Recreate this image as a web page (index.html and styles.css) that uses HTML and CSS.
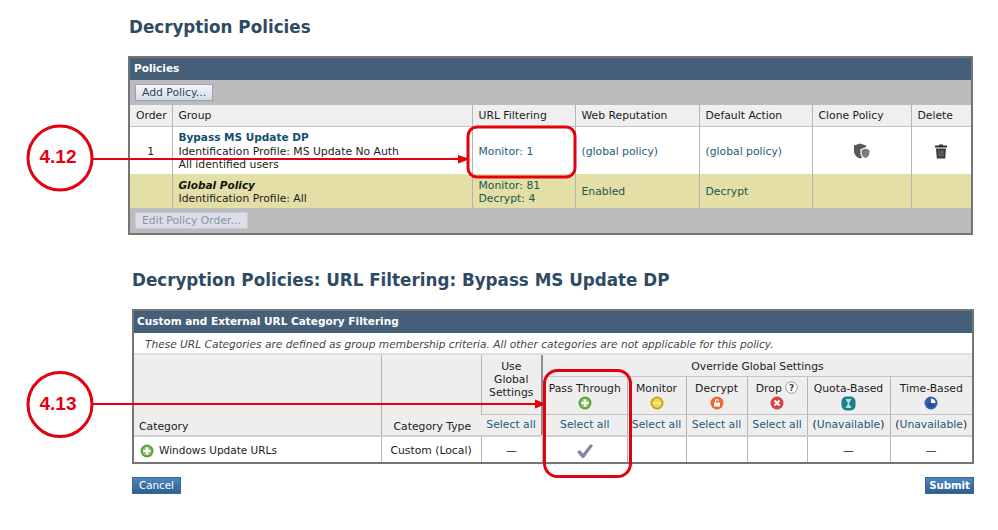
FILE: index.html
```html
<!DOCTYPE html>
<html lang="en">
<head>
<meta charset="utf-8">
<title>Decryption Policies</title>
<link rel="stylesheet" href="styles.css">
</head>
<body>
<main class="page">
  <section class="panel panel-policies">
    <h1 class="title">Decryption Policies</h1>
    <div class="box">
      <div class="box-head">Policies</div>
      <div class="toolbar"><button class="btn" type="button">Add Policy...</button></div>
      <table class="grid grid-policies">
        <colgroup>
          <col class="p1"><col class="p2"><col class="p3"><col class="p4"><col class="p5"><col class="p6"><col class="p7">
        </colgroup>
        <thead>
          <tr class="row-head">
            <th>Order</th><th>Group</th><th>URL Filtering</th><th>Web Reputation</th><th>Default Action</th><th>Clone Policy</th><th>Delete</th>
          </tr>
        </thead>
        <tbody>
          <tr class="row-one">
            <td class="center">1</td>
            <td><a class="policy-name">Bypass MS Update DP</a><br>Identification Profile: MS Update No Auth<br>All identified users</td>
            <td><a class="link">Monitor: 1</a></td>
            <td><a class="link">(global policy)</a></td>
            <td><a class="link">(global policy)</a></td>
            <td class="center">
              <svg class="icon-clone" width="18" height="16" viewBox="0 0 18 16"><path d="M1 2.500 7 0.500 13 2.500V8C13 12 10 14.500 7 15.500 4 14.500 1 12 1 8Z" fill="#55585a"/><path d="M8 6.500 12.500 5 17 6.500V10C17 13 15 14.800 12.500 15.800 10 14.800 8 13 8 10Z" fill="#787c7e" stroke="#fff" stroke-width="1.200"/></svg>
            </td>
            <td class="center">
              <svg class="icon-trash" width="14" height="15" viewBox="0 0 14 15"><path d="M5 1.500V0.500H9V1.500H13V3.500H1V1.500Z" fill="#2e2e2e"/><path d="M2 4.500H12L11.200 14.500H2.800Z" fill="#3a3a3a"/><path d="M5 6.500V12.500M7 6.500V12.500M9 6.500V12.500" stroke="#8a8a8a" stroke-width="0.800"/></svg>
            </td>
          </tr>
          <tr class="row-global">
            <td></td>
            <td><b class="global-name">Global Policy</b><br>Identification Profile: All</td>
            <td><a class="link-dark">Monitor: 81<br>Decrypt: 4</a></td>
            <td><a class="link-dark">Enabled</a></td>
            <td><a class="link-dark">Decrypt</a></td>
            <td></td>
            <td></td>
          </tr>
        </tbody>
      </table>
      <div class="toolbar toolbar-foot"><button class="btn btn-off" type="button">Edit Policy Order...</button></div>
    </div>
  </section>

  <section class="panel panel-filter">
    <h1 class="title title-filter">Decryption Policies: URL Filtering: Bypass MS Update DP</h1>
    <div class="box">
      <div class="box-head box-head-filter">Custom and External URL Category Filtering</div>
      <div class="note">These URL Categories are defined as group membership criteria. All other categories are not applicable for this policy.</div>
      <table class="grid grid-filter">
        <colgroup>
          <col class="f1"><col class="f2"><col class="f3"><col class="f4"><col class="f5"><col class="f6"><col class="f7"><col class="f8"><col class="f9">
        </colgroup>
        <thead>
          <tr class="row-override">
            <th class="bottom" rowspan="3">Category</th>
            <th class="bottom" rowspan="3">Category Type</th>
            <th class="center divider global-head" rowspan="2">Use<br>Global<br>Settings</th>
            <th class="center" colspan="6">Override Global Settings</th>
          </tr>
          <tr class="row-actions">
            <th class="center">Pass Through<span class="action-icon">
              <svg width="14" height="14" viewBox="0 0 14 14"><circle cx="7" cy="7" r="6.500" fill="#5d9e3d"/><circle cx="7" cy="7" r="4.500" fill="#9ccb6c"/><path d="M7 3.500V10.500M3.500 7H10.500" stroke="#fff" stroke-width="2.200"/></svg></span></th>
            <th class="center">Monitor<span class="action-icon">
              <svg width="14" height="14" viewBox="0 0 14 14"><circle cx="7" cy="7" r="6.500" fill="#c2a31a"/><circle cx="7" cy="7" r="4.700" fill="#f0d84e"/><path d="M3 7H11" stroke="#fbeea0" stroke-width="1.600"/></svg></span></th>
            <th class="center">Decrypt<span class="action-icon">
              <svg width="14" height="14" viewBox="0 0 14 14"><circle cx="7" cy="7" r="6.500" fill="#ec6a2a"/><path d="M4 6.500H10V10.500H4Z" fill="#fff"/><path d="M5.500 6.500V4.800C5.500 3.200 8.500 3.200 8.500 4.800" fill="none" stroke="#fff" stroke-width="1.200"/></svg></span></th>
            <th class="center">Drop <svg class="help" width="13" height="13" viewBox="0 0 13 13"><circle cx="6.500" cy="6.500" r="5.800" fill="#fff" stroke="#999"/><text class="help-mark" x="6.500" y="10">?</text></svg><span class="action-icon">
              <svg width="14" height="14" viewBox="0 0 14 14"><circle cx="7" cy="7" r="6.500" fill="#d8413f"/><path d="M4.500 4.500 9.500 9.500M9.500 4.500 4.500 9.500" stroke="#fff" stroke-width="2.200"/></svg></span></th>
            <th class="center">Quota-Based<span class="action-icon">
              <svg width="15" height="15" viewBox="0 0 15 15"><rect x="0.500" y="0.500" width="14" height="14" rx="5" fill="#1f7f86"/><path d="M4.500 3H10.500L8 7.500 10.500 12H4.500L7 7.500Z" fill="#a9e3df"/></svg></span></th>
            <th class="center">Time-Based<span class="action-icon">
              <svg width="14" height="14" viewBox="0 0 14 14"><circle cx="7" cy="7" r="6.500" fill="#2f62ae"/><path d="M7 7V2.500A4.500 4.500 0 0 1 11.500 7Z" fill="#fff"/><path d="M7 7H2.500A4.500 4.500 0 0 0 11 9Z" fill="#23508f"/></svg></span></th>
          </tr>
          <tr class="row-select">
            <th class="center divider"><a class="link">Select all</a></th>
            <th class="center"><a class="link">Select all</a></th>
            <th class="center"><a class="link">Select all</a></th>
            <th class="center"><a class="link">Select all</a></th>
            <th class="center"><a class="link">Select all</a></th>
            <th class="center">(<a class="link">Unavailable</a>)</th>
            <th class="center">(<a class="link">Unavailable</a>)</th>
          </tr>
        </thead>
        <tbody>
          <tr class="row-data">
            <td class="cat"><svg class="cat-icon" width="14" height="14" viewBox="0 0 14 14"><circle cx="7" cy="7" r="6.500" fill="#5d9e3d"/><circle cx="7" cy="7" r="4.500" fill="#9ccb6c"/><path d="M7 3.500V10.500M3.500 7H10.500" stroke="#fff" stroke-width="2.200"/></svg>Windows Update URLs</td>
            <td class="center">Custom (Local)</td>
            <td class="center">—</td>
            <td class="center"><svg width="18" height="16" viewBox="0 0 18 16"><path d="M1 9 4 7 7 10.500 14.500 1 17 2.500 8 15H6Z" fill="#8484ac"/></svg></td>
            <td></td>
            <td></td>
            <td></td>
            <td class="center">—</td>
            <td class="center">—</td>
          </tr>
        </tbody>
      </table>
    </div>
    <div class="actions">
      <button class="btn-blue" type="button">Cancel</button>
      <button class="btn-blue btn-submit" type="button">Submit</button>
    </div>
  </section>
</main>

<svg class="callouts" width="998" height="530" viewBox="0 0 998 530">
  <g fill="none" stroke="#e3000f" stroke-width="3">
    <circle cx="60" cy="158" r="32"/>
    <circle cx="60" cy="404.500" r="32"/>
    <path d="M92 159H459M92 404H536" stroke-width="2.200"/>
    <rect x="468" y="127" width="107" height="50" rx="9"/>
    <rect x="544.500" y="370.500" width="86" height="106" rx="13"/>
  </g>
  <path d="M458 155 470 159 458 163.500ZM535 399.500 546 404 535 408.500Z" fill="#e3000f"/>
  <text class="callout-text" x="58" y="163">4.12</text>
  <text class="callout-text" x="58" y="410">4.13</text>
</svg>
</body>
</html>
```

FILE: styles.css
```css
* { box-sizing: border-box; }

html, body {
  margin: 0;
  padding: 0;
  background: #fff;
}

body {
  position: relative;
  width: 998px;
  height: 530px;
  overflow: hidden;
  font-family: "DejaVu Sans", Verdana, sans-serif;
  font-size: 10.800px;
  line-height: 13.500px;
  color: #1c1c1c;
}

.page {
  display: flex;
  flex-direction: column;
}

.panel-policies {
  margin-left: 128px;
  width: 845px;
  padding-top: 17px;
}

.panel-filter {
  margin-left: 132px;
  width: 842px;
  padding-top: 35px;
}

.title {
  margin: 0 0 18px 1px;
  font-size: 16.750px;
  line-height: 21px;
  font-weight: 700;
  color: #2f4a63;
}

.title-filter {
  margin: 0 0 18px 0;
}

.box {
  border: 2px solid #757575;
  background: #fff;
}

.box-head {
  height: 22px;
  padding: 3px 4px 0;
  background: #47607a;
  color: #fff;
  font-size: 10.500px;
  font-weight: 700;
  line-height: 15px;
}

.box-head-filter {
  padding-left: 3px;
}

.toolbar {
  height: 25px;
  padding: 4px 5px;
  background: #bcbcbc;
}

.btn {
  display: block;
  height: 17px;
  padding: 0 6px;
  border: 1px solid #9aa3b5;
  background: linear-gradient(#f4f6fb, #d5dbea);
  color: #33435a;
  font: 10.800px/13px "DejaVu Sans", Verdana, sans-serif;
}

.btn-off {
  border-color: #c6cad2;
  background: #d9deea;
  color: #8d929b;
}

.grid {
  width: 100%;
  table-layout: fixed;
  border-collapse: collapse;
}

.grid th,
.grid td {
  padding: 0 0 0 6px;
  border-left: 1px solid #b4b4b4;
  text-align: left;
  font-weight: 400;
  vertical-align: middle;
}

.grid th:first-child,
.grid td:first-child {
  border-left: 0;
}

.grid .center {
  padding-left: 0;
  text-align: center;
}

.grid-policies thead th {
  height: 21px;
  padding-top: 1px;
  background: #efefef;
  border-bottom: 1px solid #c4c4c4;
}

.row-one td {
  height: 48px;
  padding-top: 2px;
}

.row-global td {
  height: 34px;
  padding-top: 2px;
  background: #e4dfa6;
}

.p1 { width: 42px; }
.p2 { width: 300px; }
.p3 { width: 103px; }
.p4 { width: 124px; }
.p5 { width: 113px; }
.p6 { width: 99px; }
.p7 { width: 60px; }

.policy-name {
  color: #12506f;
  font-size: 10.500px;
  font-weight: 700;
}

.global-name {
  color: #111;
  font-size: 10.500px;
  font-style: italic;
}

.link {
  color: #1f5b78;
}

.link-dark {
  color: #17594f;
}

.icon-clone,
.icon-trash {
  display: block;
  margin: 0 auto;
}

.note {
  height: 22px;
  padding: 4px 0 0 11px;
  background: #fff;
  border-bottom: 2px solid #dedede;
  color: #444;
  font-size: 10.600px;
  font-style: italic;
  line-height: 14px;
}

.f1 { width: 247px; }
.f2 { width: 100px; }
.f3 { width: 61px; }
.f4 { width: 85px; }
.f5 { width: 59px; }
.f6 { width: 61px; }
.f7 { width: 60px; }
.f8 { width: 83px; }
.f9 { width: 82px; }

.grid-filter thead th {
  background: #eeeeee;
}

.grid-filter thead .bottom {
  vertical-align: bottom;
  padding-bottom: 2px;
  padding-left: 5px;
  border-bottom: 2px solid #cfcfcf;
}

.grid-filter thead th + .bottom {
  padding-left: 12px;
}

.row-override th {
  height: 21px;
  padding-top: 2px;
  border-bottom: 1px solid #c4c4c4;
}

.row-actions th {
  height: 38px;
  border-bottom: 1px solid #c4c4c4;
  vertical-align: top;
  padding-top: 5px;
}

.row-select th {
  height: 22px;
  border-bottom: 2px solid #cfcfcf;
}

.grid-filter thead .divider {
  border-right: 2px solid #8e8e8e;
}

.grid-filter thead .global-head {
  vertical-align: top;
  padding-top: 5px;
  border-bottom: 1px solid #c4c4c4;
  line-height: 13px;
}

.action-icon {
  display: block;
  height: 15px;
  margin-top: 1px;
}

.action-icon svg {
  display: block;
  margin: 0 auto;
}

.help {
  margin: -4px 0 -2px;
  vertical-align: 0;
}

.help-mark {
  font: 700 9px "DejaVu Sans", sans-serif;
  fill: #444;
  text-anchor: middle;
}

.row-data td {
  height: 26px;
  padding-top: 2px;
}

.row-data svg {
  vertical-align: middle;
}

.grid-filter .cat {
  padding-left: 6px;
  font-size: 10.500px;
}

.cat-icon {
  margin-right: 5px;
}

.actions {
  display: flex;
  justify-content: space-between;
  margin-top: 13px;
}

.btn-blue {
  height: 17px;
  padding: 0 6px;
  border: 1px solid #3c6794;
  background: linear-gradient(#4f86bd, #2d5f91);
  color: #fff;
  font: 10.300px/13px "DejaVu Sans", Verdana, sans-serif;
}

.btn-submit {
  padding: 0 3px;
  font-weight: 700;
  font-size: 10.200px;
}

.callouts {
  position: absolute;
  left: 0;
  top: 0;
  pointer-events: none;
}

.callout-text {
  font: 700 19px "Liberation Sans", Arial, sans-serif;
  fill: #e3000f;
  text-anchor: middle;
}
```
